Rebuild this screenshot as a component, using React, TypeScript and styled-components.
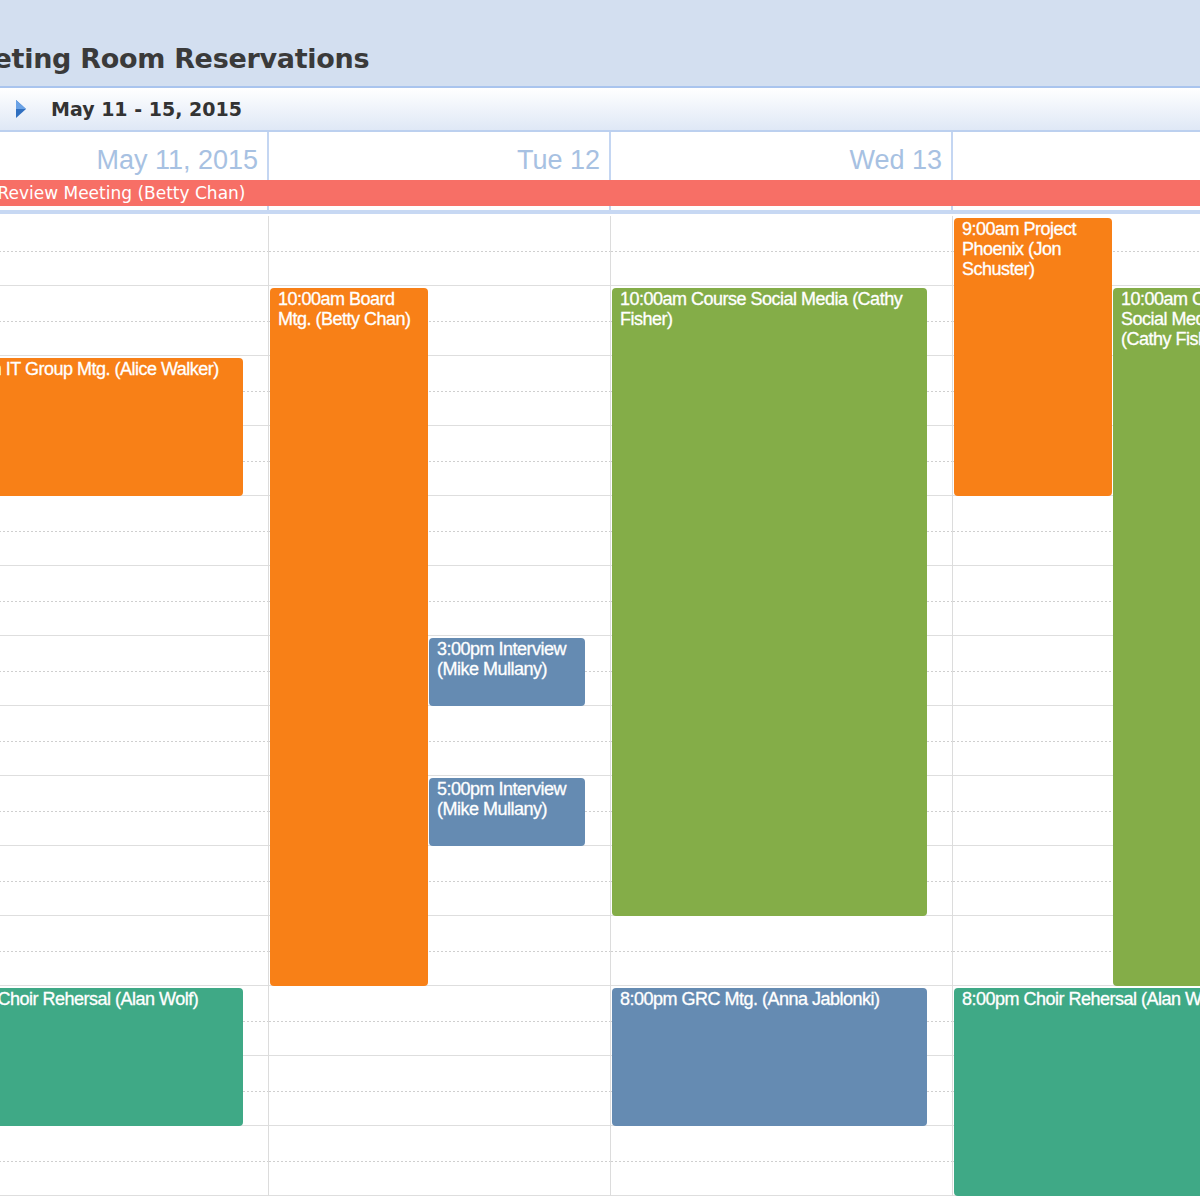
import React from 'react'
import styled, { createGlobalStyle } from 'styled-components'

const GlobalStyle = createGlobalStyle`
  html, body { margin: 0; padding: 0; background: #fff; overflow: hidden; }
  body { font-family: Arial, "Liberation Sans", sans-serif; }
`

const HOUR = 70
const START = 9
const COL = 342

interface Ev {
  day: number
  start: number
  end: number
  lane: 'left' | 'right' | 'wide'
  color: string
  text: string
}

const events: Ev[] = [
  { day: 0, start: 11, end: 13, lane: 'wide', color: '#f88017', text: '11:00am IT Group Mtg. (Alice Walker)' },
  { day: 0, start: 20, end: 22, lane: 'wide', color: '#3fa986', text: '8:00pm Choir Rehersal (Alan Wolf)' },
  { day: 1, start: 10, end: 20, lane: 'left', color: '#f88017', text: '10:00am Board Mtg. (Betty Chan)' },
  { day: 1, start: 15, end: 16, lane: 'right', color: '#658bb2', text: '3:00pm Interview (Mike Mullany)' },
  { day: 1, start: 17, end: 18, lane: 'right', color: '#658bb2', text: '5:00pm Interview (Mike Mullany)' },
  { day: 2, start: 10, end: 19, lane: 'wide', color: '#84ad48', text: '10:00am Course Social Media (Cathy Fisher)' },
  { day: 2, start: 20, end: 22, lane: 'wide', color: '#658bb2', text: '8:00pm GRC Mtg. (Anna Jablonki)' },
  { day: 3, start: 9, end: 13, lane: 'left', color: '#f88017', text: '9:00am Project Phoenix (Jon Schuster)' },
  { day: 3, start: 10, end: 20, lane: 'right', color: '#84ad48', text: '10:00am Course Social Media (Cathy Fisher)' },
  { day: 3, start: 20, end: 23, lane: 'wide', color: '#3fa986', text: '8:00pm Choir Rehersal (Alan Wolf)' },
]

const days = ['May 11, 2015', 'Tue 12', 'Wed 13', 'Thu 14']

const Page = styled.div`
  margin-left: -73px;
  width: ${COL * 4}px;
`

const TitleBar = styled.div`
  height: 88px;
  background: #d3dff0;
  border-bottom: 2px solid #a9c4ee;
  display: flex;
  align-items: flex-end;
  padding: 0 0 12px 22px;
  box-sizing: border-box;
`

const Title = styled.h1`
  margin: 0;
  font-family: "DejaVu Sans", Verdana, sans-serif;
  font-size: 27px;
  font-weight: bold;
  color: #3a3a3a;
  letter-spacing: -0.3px;
  white-space: nowrap;
`

const Toolbar = styled.div`
  height: 44px;
  background: linear-gradient(#ffffff, #dfe8f6);
  border-bottom: 2px solid #bcd0ef;
  display: flex;
  align-items: center;
  gap: 24px;
  padding-left: 88px;
  box-sizing: border-box;
  font-family: "DejaVu Sans", Verdana, sans-serif;
  font-size: 19px;
  font-weight: bold;
  color: #333;
`

const Row = styled.div`
  display: grid;
  grid-template-columns: repeat(4, ${COL}px);
`

const DayHead = styled.div`
  height: 47px;
  border-right: 2px solid #c4d6f2;
  text-align: right;
  padding: 13px 9px 0 0;
  box-sizing: border-box;
  font-size: 27px;
  color: #a7c1e2;
  white-space: nowrap;
`

const AllDay = styled.div`
  height: 31px;
  border-bottom: 4px solid #c7d8f3;
  position: relative;
  display: grid;
  grid-template-columns: repeat(4, ${COL}px);
`

const AllDayCell = styled.div`
  border-right: 2px solid #c4d6f2;
`

const AllDayBar = styled.div`
  position: absolute;
  left: -79px;
  right: 0;
  top: 1px;
  height: 26px;
  background: #f76f66;
  color: #fff;
  font-family: "DejaVu Sans", Verdana, sans-serif;
  font-size: 17px;
  line-height: 26px;
  white-space: nowrap;
`

const Body = styled.div`
  display: grid;
  grid-template-columns: repeat(4, ${COL}px);
  margin-top: 2px;
`

const DayCol = styled.div`
  position: relative;
  border-right: 1px solid #dcdcdc;
  height: ${HOUR * 14}px;
`

const Slot = styled.div`
  height: ${HOUR}px;
  box-sizing: border-box;
  border-bottom: 1px solid #dedede;
  background-image: linear-gradient(to right, #cfcfcf 50%, transparent 50%);
  background-size: 4px 1px;
  background-repeat: repeat-x;
  background-position: 0 ${HOUR / 2}px;
`

const Event = styled.div<{ $bg: string }>`
  position: absolute;
  background: ${p => p.$bg};
  border-radius: 4px;
  color: #fff;
  font-size: 18px;
  line-height: 20px;
  letter-spacing: -0.5px;
  padding: 1px 8px;
  box-sizing: border-box;
  overflow: hidden;
  -webkit-text-stroke: 0.3px #fff;
`

const Arrow = () => (
  <svg width="12" height="18" viewBox="0 0 12 18">
    <path d="M1 0 L11 9 L1 18 Z" fill="#2f6fc0" />
    <path d="M1 0 L11 9 L1 9 Z" fill="#6aa2e6" />
  </svg>
)

const lanePos = (lane: Ev['lane']) => {
  switch (lane) {
    case 'left': return { left: 1, width: 158 }
    case 'right': return { left: 160, width: 156 }
    default: return { left: 1, width: 315 }
  }
}

export default function App() {
  return (
    <>
      <GlobalStyle />
      <Page>
        <TitleBar><Title>Meeting Room Reservations</Title></TitleBar>
        <Toolbar><Arrow /><span>May 11 - 15, 2015</span></Toolbar>
        <Row>
          {days.map(d => <DayHead key={d}>{d}</DayHead>)}
        </Row>
        <AllDay>
          {days.map(d => <AllDayCell key={d} />)}
          <AllDayBar>Quarterly Project Review Meeting (Betty Chan)</AllDayBar>
        </AllDay>
        <Body>
          {days.map((d, i) => (
            <DayCol key={d}>
              {Array.from({ length: 14 }).map((_, h) => <Slot key={h} />)}
              {events.filter(e => e.day === i).map(e => {
                const pos = lanePos(e.lane)
                return (
                  <Event
                    key={e.text + e.start}
                    $bg={e.color}
                    style={{
                      top: (e.start - START) * HOUR + 2,
                      height: (e.end - e.start) * HOUR - 2,
                      left: pos.left,
                      width: pos.width,
                    }}
                  >
                    {e.text}
                  </Event>
                )
              })}
            </DayCol>
          ))}
        </Body>
      </Page>
    </>
  )
}
